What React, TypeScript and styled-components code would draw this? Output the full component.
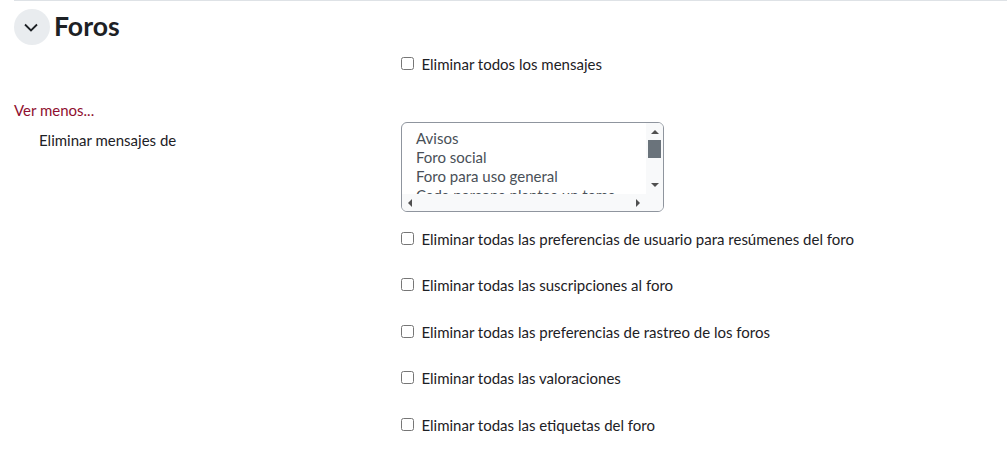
import React from 'react';
import styled, { createGlobalStyle } from 'styled-components';

const GlobalStyle = createGlobalStyle`
    html, body {
        margin: 0;
        padding: 0;
        background: #fff;
    }
    body {
        font-family: Lato, "Liberation Sans", sans-serif;
        font-size: 15px;
        line-height: 22.5px;
        color: #1d2125;
    }
`;

const Section = styled.section`
    margin-left: 14px;
    border-top: 1px solid #dee2e6;
    padding-top: 8px;
`;

const Header = styled.div`
    display: flex;
    align-items: center;
    gap: 4px;
    height: 36px;
`;

const CollapseButton = styled.button`
    width: 36px;
    height: 36px;
    padding: 0;
    border: 0;
    border-radius: 50%;
    background: #e9ecef;
    color: #1d2125;
    display: flex;
    align-items: center;
    justify-content: center;
`;

const Title = styled.h3`
    margin: 0 0 2px;
    font-size: 26.6px;
    line-height: 34px;
    font-weight: 700;
`;

const FirstRow = styled.div`
    margin-top: 8px;
    padding-left: 387px;
`;

const CheckLabel = styled.label`
    display: flex;
    align-items: center;
    gap: 7.4px;
    height: 23px;
`;

const Check = styled.input.attrs({ type: 'checkbox' })`
    width: 13px;
    height: 13px;
    margin: 0;
    flex: none;
    position: relative;
    top: -1px;
`;

const MoreLink = styled.a`
    display: block;
    margin-top: 23px;
    color: #8f0f2f;
    line-height: 23px;
`;

const SelectRow = styled.div`
    display: grid;
    grid-template-columns: 387px 263px;
`;

const RowLabel = styled.div`
    padding-left: 25px;
    line-height: 23px;
    margin-top: 7px;
`;

const ListBox = styled.div`
    box-sizing: border-box;
    height: 90px;
    border: 1px solid #8f959e;
    border-radius: 6px;
    overflow: hidden;
    display: grid;
    grid-template-columns: 1fr 17px;
    grid-template-rows: 1fr 17px;
    background: #fff;
    color: #495057;
`;

const Options = styled.div`
    padding: 6px 0 0 14px;
    line-height: 19px;
    overflow: hidden;
    white-space: nowrap;
`;

const Option = styled.div`
    height: 19px;
`;

const VerticalBar = styled.div`
    background: #f8f9fa;
    display: flex;
    flex-direction: column;
    align-items: center;
    padding: 7px 0 0;
`;

const VerticalThumb = styled.div`
    width: 13px;
    height: 18px;
    margin: 6px 0 25px;
    background: #6a737b;
`;

const HorizontalBar = styled.div`
    grid-column: 1 / 3;
    background: #f8f9fa;
    display: flex;
    align-items: center;
    justify-content: space-between;
    padding: 0 23px 0 6px;
`;

const Arrow = styled.div<{ $dir: 'up' | 'down' | 'left' | 'right' }>`
    width: 0;
    height: 0;
    flex: none;
    border-style: solid;
    border-color: transparent;
    ${({ $dir }) => $dir === 'up' && 'border-width: 0 4px 4px; border-bottom-color: #505050;'}
    ${({ $dir }) => $dir === 'down' && 'border-width: 4px 4px 0; border-top-color: #505050;'}
    ${({ $dir }) => $dir === 'left' && 'border-width: 4px 4px 4px 0; border-right-color: #505050;'}
    ${({ $dir }) => $dir === 'right' && 'border-width: 4px 0 4px 4px; border-left-color: #505050;'}
`;

const CheckList = styled.div`
    display: flex;
    flex-direction: column;
    gap: 23.5px;
    margin-top: 15.6px;
    padding-left: 387px;
`;

const items = [
    'Eliminar todas las preferencias de usuario para resúmenes del foro',
    'Eliminar todas las suscripciones al foro',
    'Eliminar todas las preferencias de rastreo de los foros',
    'Eliminar todas las valoraciones',
    'Eliminar todas las etiquetas del foro',
];

const App = () => {
    return (
        <Section>
            <GlobalStyle />
            <Header>
                <CollapseButton aria-label="Colapsar">
                    <svg width="16" height="16" viewBox="0 0 16 16" fill="none" stroke="currentColor" strokeWidth="1.8">
                        <path d="M1 5.5l6 6 6-6" />
                    </svg>
                </CollapseButton>
                <Title>Foros</Title>
            </Header>
            <FirstRow>
                <CheckLabel><Check />Eliminar todos los mensajes</CheckLabel>
            </FirstRow>
            <MoreLink>Ver menos...</MoreLink>
            <SelectRow>
                <RowLabel>Eliminar mensajes de</RowLabel>
                <ListBox>
                    <Options>
                        <Option>Avisos</Option>
                        <Option>Foro social</Option>
                        <Option>Foro para uso general</Option>
                        <Option>Cada persona plantea un tema</Option>
                    </Options>
                    <VerticalBar>
                        <Arrow $dir="up" />
                        <VerticalThumb />
                        <Arrow $dir="down" />
                    </VerticalBar>
                    <HorizontalBar>
                        <Arrow $dir="left" />
                        <Arrow $dir="right" />
                    </HorizontalBar>
                </ListBox>
            </SelectRow>
            <CheckList>
                {items.map((text) => (
                    <CheckLabel key={text}><Check />{text}</CheckLabel>
                ))}
            </CheckList>
        </Section>
    );
};

export default App;
